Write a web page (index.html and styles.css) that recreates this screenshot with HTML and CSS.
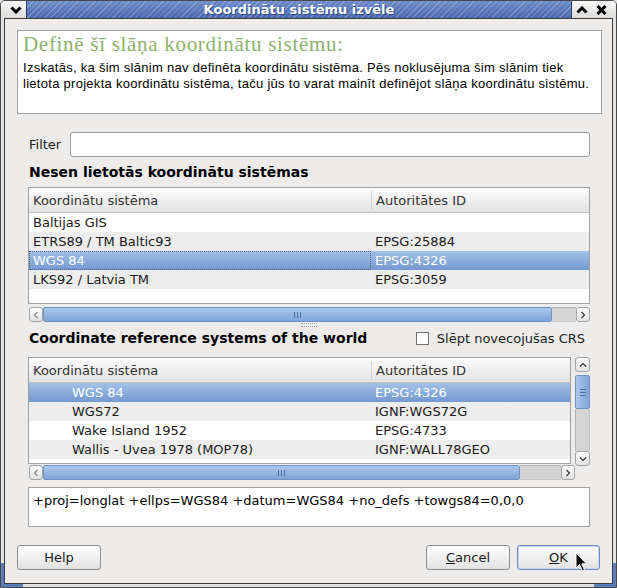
FILE: index.html
```html
<!DOCTYPE html>
<html lang="lv">
  <head>
    <meta charset="UTF-8" />
    <title>Koordinātu sistēmu izvēle</title>
    <link rel="stylesheet" href="styles.css">
  </head>
  <body>
    <div class="window">
      <div class="titlebar">
        <div class="tb-left">
          <svg width="12" height="8" viewBox="0 0 12 8"><polyline points="1.5,1.5 6,6 10.5,1.5" fill="none" stroke="#000" stroke-width="3"/></svg>
        </div>
        <div class="tb-title">Koordinātu sistēmu izvēle</div>
        <div class="tb-right">
          <svg width="12" height="8" viewBox="0 0 12 8"><polyline points="1.5,6.5 6,2 10.5,6.5" fill="none" stroke="#000" stroke-width="3"/></svg>
          <svg width="11" height="10" viewBox="0 0 11 10"><path d="M1.5 1 L9.5 9 M9.5 1 L1.5 9" stroke="#000" stroke-width="3"/></svg>
        </div>
      </div>

      <div class="client">
        <div class="info-box">
          <h1>Definē šī slāņa koordinātu sistēmu:</h1>
          <p>Izskatās, ka šim slānim nav definēta koordinātu sistēma. Pēs noklusējuma šim slānim tiek lietota projekta koordinātu sistēma, taču jūs to varat mainīt definējot slāņa koordinātu sistēmu.</p>
        </div>

        <div class="main">
          <div class="filter-row">
            <label>Filter</label>
            <input type="text" class="filter-input" />
          </div>

          <h2 class="section-title">Nesen lietotās koordinātu sistēmas</h2>
          <div class="list recent">
            <div class="list-head">
              <div class="col-name">Koordinātu sistēma</div>
              <div class="col-id">Autoritātes ID</div>
            </div>
            <div class="row">
              <div class="col-name">Baltijas GIS</div>
              <div class="col-id"></div>
            </div>
            <div class="row alt">
              <div class="col-name">ETRS89 / TM Baltic93</div>
              <div class="col-id">EPSG:25884</div>
            </div>
            <div class="row selected">
              <div class="col-name focus">WGS 84</div>
              <div class="col-id">EPSG:4326</div>
            </div>
            <div class="row alt">
              <div class="col-name">LKS92 / Latvia TM</div>
              <div class="col-id">EPSG:3059</div>
            </div>
          </div>
          <div class="hscroll recent-scroll">
            <div class="sb-btn"><svg width="6" height="8" viewBox="0 0 6 8"><polyline points="4.5,1 1.5,4 4.5,7" fill="none" stroke="#8a8a8a" stroke-width="1.2"/></svg></div>
            <div class="sb-thumb" style="width: 509px"><span class="grip-v"></span></div>
            <div class="sb-track"></div>
            <div class="sb-btn"><svg width="6" height="8" viewBox="0 0 6 8"><polyline points="1.5,1 4.5,4 1.5,7" fill="none" stroke="#333" stroke-width="1.2"/></svg></div>
          </div>

          <div class="splitter"><span></span></div>

          <div class="world-bar">
            <h2 class="section-title">Coordinate reference systems of the world</h2>
            <label class="check"><span class="box"></span>Slēpt novecojušas CRS</label>
          </div>

          <div class="world">
            <div class="list world-list">
              <div class="list-head">
                <div class="col-name">Koordinātu sistēma</div>
                <div class="col-id">Autoritātes ID</div>
              </div>
              <div class="row selected">
                <div class="col-name child">WGS 84</div>
                <div class="col-id">EPSG:4326</div>
              </div>
              <div class="row alt">
                <div class="col-name child">WGS72</div>
                <div class="col-id">IGNF:WGS72G</div>
              </div>
              <div class="row">
                <div class="col-name child">Wake Island 1952</div>
                <div class="col-id">EPSG:4733</div>
              </div>
              <div class="row alt">
                <div class="col-name child">Wallis - Uvea 1978 (MOP78)</div>
                <div class="col-id">IGNF:WALL78GEO</div>
              </div>
              <div class="row">
                <div class="col-name child">Yemen NGN96</div>
                <div class="col-id">EPSG:4163</div>
              </div>
            </div>
            <div class="vscroll">
              <div class="sb-btn"><svg width="8" height="6" viewBox="0 0 8 6"><polyline points="1,4.5 4,1.5 7,4.5" fill="none" stroke="#333" stroke-width="1.2"/></svg></div>
              <div class="sb-thumb-v"><span class="grip-h"></span></div>
              <div class="sb-track"></div>
              <div class="sb-btn"><svg width="8" height="6" viewBox="0 0 8 6"><polyline points="1,1.5 4,4.5 7,1.5" fill="none" stroke="#333" stroke-width="1.2"/></svg></div>
            </div>
            <div class="hscroll world-scroll">
              <div class="sb-btn"><svg width="6" height="8" viewBox="0 0 6 8"><polyline points="4.5,1 1.5,4 4.5,7" fill="none" stroke="#8a8a8a" stroke-width="1.2"/></svg></div>
              <div class="sb-thumb" style="width: 477px"><span class="grip-v"></span></div>
              <div class="sb-track"></div>
              <div class="sb-btn"><svg width="6" height="8" viewBox="0 0 6 8"><polyline points="1.5,1 4.5,4 1.5,7" fill="none" stroke="#333" stroke-width="1.2"/></svg></div>
            </div>
          </div>

          <div class="proj">+proj=longlat +ellps=WGS84 +datum=WGS84 +no_defs +towgs84=0,0,0</div>
        </div>

        <div class="buttons">
          <button class="btn help">Help</button>
          <div class="spacer"></div>
          <button class="btn cancel"><u>C</u>ancel</button>
          <button class="btn ok"><u>O</u>K</button>
        </div>

        <!-- mouse pointer resting on OK -->
        <svg class="pointer" width="13" height="21" viewBox="0 0 13 21">
          <path d="M1 1 L1 16 L4.5 12.5 L7.5 19 L9.5 18 L6.8 11.8 L11.5 11.8 Z" fill="#000" stroke="#fff" stroke-width="1"/>
        </svg>
      </div>

      <!-- resize grips in the lower frame corners -->
      <span class="grip-corner left"></span>
      <span class="grip-corner right"></span>
    </div>
  </body>
</html>
```

FILE: styles.css
```css
* {
  margin: 0;
  padding: 0;
  box-sizing: border-box;
}
body {
  width: 617px;
  height: 588px;
  overflow: hidden;
  font-family: "DejaVu Sans", sans-serif;
  font-size: 13px;
  color: #1c1c1c;
  background: #e4e4e4;
}
.window {
  width: 617px;
  height: 588px;
  display: flex;
  flex-direction: column;
  background: #e3e2e0;
  border: 1px solid #4a4a4a;
  border-radius: 5px 5px 0 0;
  overflow: hidden;
  position: relative;
}
.grip-corner {
  position: absolute;
  bottom: 0;
  width: 22px;
  height: 24px;
  border-bottom: 3px solid #5a7dbd;
}
.grip-corner.left {
  left: 0;
  border-left: 3px solid #5a7dbd;
}
.grip-corner.right {
  right: 0;
  border-right: 3px solid #5a7dbd;
}

/* title bar */
.titlebar {
  height: 17px;
  display: flex;
  flex-shrink: 0;
}
.tb-left,
.tb-right {
  display: flex;
  align-items: center;
  background: linear-gradient(#f7f7f6, #dddcda);
}
.tb-left {
  width: 25px;
  padding-left: 9px;
}
.tb-right {
  width: 44px;
  gap: 8px;
  padding-left: 4px;
}
.tb-title {
  flex: 1;
  text-align: center;
  color: #fff;
  font-weight: bold;
  font-size: 13px;
  line-height: 17px;
  text-shadow: 1px 1px 0 #2c477d;
  border-left: 1px solid #2b3f6c;
  border-right: 1px solid #2b3f6c;
  background:
    repeating-linear-gradient(135deg, rgba(255, 255, 255, 0.22) 0 1px, transparent 1px 4px),
    linear-gradient(#6d8bc9, #4867ad);
}

/* client area */
.client {
  flex: 1;
  margin: 0 3px 3px;
  border: 1px solid #3c3c3c;
  background: #edeceb;
  padding: 11px 10px 0 12px;
  display: flex;
  flex-direction: column;
  position: relative;
}
.info-box {
  height: 84px;
  background: #fff;
  border: 1px solid #a2a2a2;
  padding: 1px 5px 0;
}
.info-box h1 {
  font-family: "Liberation Serif", serif;
  font-weight: normal;
  font-size: 21px;
  letter-spacing: 0.7px;
  line-height: 24px;
  color: #8db26b;
}
.info-box p {
  margin-top: 4px;
  font-family: "Liberation Sans", Arial, sans-serif;
  font-size: 13px;
  letter-spacing: 0.28px;
  line-height: 16px;
  color: #000;
}

.main {
  padding: 0 12px 0 11px;
  display: flex;
  flex-direction: column;
}
.filter-row {
  margin-top: 18px;
  display: flex;
  align-items: center;
  gap: 9px;
}
.filter-row label {
  padding-left: 1px;
}
.filter-input {
  flex: 1;
  height: 25px;
  border: 1px solid #9c9c9c;
  border-radius: 3px;
  background: #fff;
  outline: none;
}
.section-title {
  font-size: 14px;
  font-weight: bold;
  line-height: 16px;
  color: #000;
  padding-left: 1px;
}
.main > .section-title {
  margin-top: 7px;
}

/* lists */
.list {
  border: 1px solid #a0a0a0;
  background: #fff;
  overflow: hidden;
}
.recent {
  margin-top: 7px;
  height: 117px;
}
.list-head {
  display: flex;
  height: 25px;
  align-items: center;
  color: #333;
  border-bottom: 1px solid #c4c4c4;
  background: linear-gradient(#fbfbfb, #e4e4e4);
}
.list-head .col-id {
  border-left: 1px solid #cfcfcf;
  height: 19px;
  line-height: 19px;
}
.row {
  display: flex;
  height: 19px;
  line-height: 19px;
  color: #1a1a1a;
}
.row.alt {
  background: #ededed;
}
.row.selected {
  color: #fff;
  background: linear-gradient(#a3c1e7, #7499d0);
}
.col-name {
  width: 342px;
  padding-left: 4px;
  white-space: nowrap;
}
.col-id {
  flex: 1;
  padding-left: 4px;
  white-space: nowrap;
}
.col-name.focus {
  outline: 1px dotted #51627e;
  outline-offset: -1px;
}
.col-name.child {
  padding-left: 43px;
}

/* scroll bars */
.hscroll {
  display: flex;
  height: 15px;
}
.recent-scroll {
  margin: 3px 0 0 1px;
}
.sb-btn {
  width: 14px;
  height: 15px;
  display: flex;
  align-items: center;
  justify-content: center;
  border: 1px solid #a4a4a4;
  border-radius: 3px;
  background: linear-gradient(#fdfdfd, #e2e2e2);
  flex-shrink: 0;
}
.sb-thumb {
  display: flex;
  align-items: center;
  justify-content: center;
  border: 1px solid #6f92c4;
  border-radius: 2px;
  background: linear-gradient(#abc7eb, #7fa5d8);
  flex-shrink: 0;
}
.sb-track {
  flex: 1;
  background: #d4d4d4;
  border-top: 1px solid #b4b4b4;
  border-bottom: 1px solid #c4c4c4;
}
.grip-v {
  width: 7px;
  height: 6px;
  background: repeating-linear-gradient(90deg, #4d6ea3 0 1px, transparent 1px 3px);
}
.grip-h {
  width: 6px;
  height: 7px;
  background: repeating-linear-gradient(#4d6ea3 0 1px, transparent 1px 3px);
}

.splitter {
  height: 8px;
  display: flex;
  justify-content: center;
  padding-top: 1px;
}
.splitter span {
  width: 16px;
  height: 4px;
  border-top: 1px dotted #a2a2a2;
  border-bottom: 1px dotted #a2a2a2;
}

.world-bar {
  display: flex;
  align-items: center;
  justify-content: space-between;
  height: 16px;
}
.check {
  display: flex;
  align-items: center;
  gap: 8px;
  padding-right: 5px;
}
.check .box {
  width: 13px;
  height: 13px;
  border: 1px solid #6e6e6e;
  background: #fff;
}

.world {
  margin-top: 11px;
  display: grid;
  grid-template-columns: 1fr 15px;
  column-gap: 4px;
}
.world-list {
  height: 107px;
}
.vscroll {
  display: flex;
  flex-direction: column;
  height: 109px;
}
.vscroll .sb-btn {
  width: 15px;
  height: 15px;
}
.sb-thumb-v {
  height: 34px;
  margin-top: 3px;
  display: flex;
  align-items: center;
  justify-content: center;
  border: 1px solid #6f92c4;
  border-radius: 2px;
  background: linear-gradient(90deg, #abc7eb, #7fa5d8);
}
.vscroll .sb-track {
  border: none;
  border-left: 1px solid #b4b4b4;
  border-right: 1px solid #c4c4c4;
}
.world-scroll {
  margin: -1px -4px 0 1px;
}

.proj {
  margin-top: 7px;
  height: 40px;
  background: #fff;
  border: 1px solid #a2a2a2;
  padding: 5px 4px 0;
  line-height: 16px;
  color: #000;
}

/* dialog buttons */
.buttons {
  margin-top: 18px;
  display: flex;
  gap: 7px;
  padding-right: 2px;
}
.buttons .spacer {
  flex: 1;
}
.btn {
  height: 25px;
  font-family: "DejaVu Sans", sans-serif;
  font-size: 13px;
  color: #1a1a1a;
  border: 1px solid #8d8d8d;
  border-radius: 3px;
  background: linear-gradient(#fefefe, #e2e2e2);
}
.btn.help {
  width: 84px;
}
.btn.cancel {
  width: 84px;
}
.btn.ok {
  width: 83px;
  border-color: #6c8dc4;
  box-shadow: inset 0 0 0 1px #c6d6ef;
}

.pointer {
  position: absolute;
  left: 570px;
  top: 533px;
}
```
